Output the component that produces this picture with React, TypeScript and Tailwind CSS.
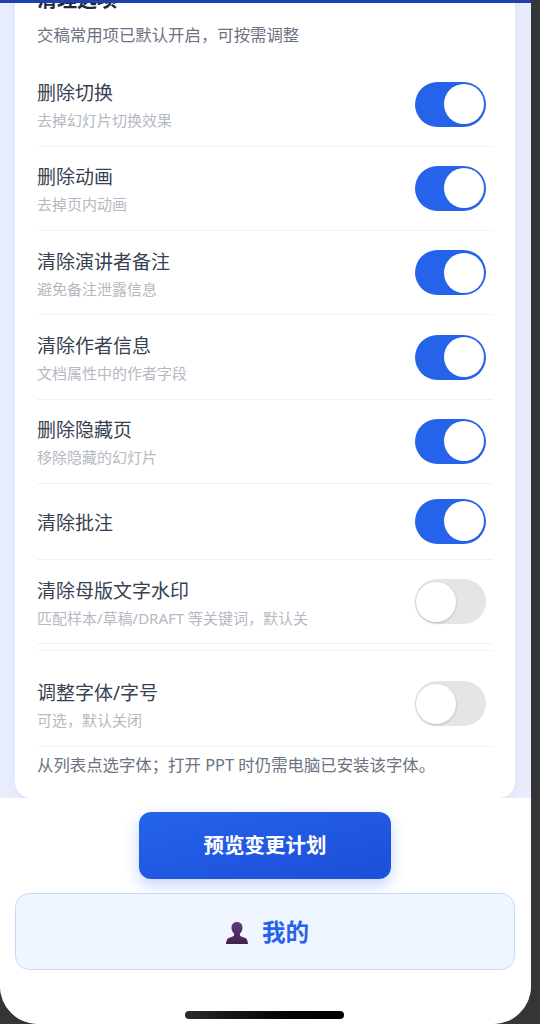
import React from "react";

type RowProps = {
  label: string;
  sub?: string;
  on?: boolean;
};

const options: RowProps[] = [
  { label: "删除切换", sub: "去掉幻灯片切换效果", on: true },
  { label: "删除动画", sub: "去掉页内动画", on: true },
  { label: "清除演讲者备注", sub: "避免备注泄露信息", on: true },
  { label: "清除作者信息", sub: "文档属性中的作者字段", on: true },
  { label: "删除隐藏页", sub: "移除隐藏的幻灯片", on: true },
  { label: "清除批注", on: true },
  { label: "清除母版文字水印", sub: "匹配样本/草稿/DRAFT 等关键词，默认关" },
];

const Toggle = ({ on }: { on?: boolean }) => (
  <div
    className={
      on
        ? "mr-[7px] flex h-[45px] w-[71px] shrink-0 items-center justify-end rounded-full bg-[#2563eb] pr-[2px]"
        : "mr-[7px] flex h-[45px] w-[71px] shrink-0 items-center justify-start rounded-full bg-[#e5e5e5] pl-[1px]"
    }
  >
    <div
      className={
        on
          ? "h-[40px] w-[40px] rounded-full bg-white"
          : "h-[40px] w-[40px] rounded-full bg-white shadow-[0_1px_3px_rgba(0,0,0,0.2)]"
      }
    />
  </div>
);

const Row = ({ label, sub, on }: RowProps) => (
  <div
    className={
      sub
        ? "flex h-[84.3px] items-center justify-between border-b border-[#f1f2f4]"
        : "flex h-[76px] items-center justify-between border-b border-[#f1f2f4]"
    }
  >
    <div className={sub ? "min-w-0 pt-[4px]" : "min-w-0 pt-[3px]"}>
      <div className="text-[19px] leading-[26px] text-[#374151]">{label}</div>
      {sub && <div className="mt-[2px] text-[15px] leading-[24px] text-[#b4b9c2]">{sub}</div>}
    </div>
    <Toggle on={on} />
  </div>
);

const PersonIcon = () => (
  <svg width="22" height="22" viewBox="0 0 22 22" aria-hidden="true">
    <defs>
      <linearGradient id="bust" x1="0" y1="0" x2="0" y2="1">
        <stop offset="0" stopColor="#5f3a80" />
        <stop offset="1" stopColor="#43204f" />
      </linearGradient>
    </defs>
    <path
      d="M11 0C7.600 0 5.500 2.400 5.500 5.800c0 2.500 1 4.500 2.600 5.700v1.300c0 .8-.4 1.300-1.200 1.600L2.600 16.100C1 16.900.4 18.700 0 22h22c-.4-3.300-1-5.100-2.600-5.900l-4.300-1.700c-.8-.3-1.200-.8-1.200-1.600v-1.300c1.600-1.200 2.600-3.200 2.600-5.700C16.500 2.400 14.400 0 11 0z"
      fill="url(#bust)"
    />
  </svg>
);

export default function App() {
  return (
    <div className="h-[1024px] w-[540px] overflow-hidden bg-[#333536] font-['Noto_Sans','Noto_Sans_CJK_SC',sans-serif]">
      <div className="flex h-full w-[531px] flex-col overflow-hidden rounded-b-[38px] bg-[#e8edfd]">
        <div className="h-[3px] shrink-0 bg-[#1e40af]" />

        <main className="h-[795px] shrink-0 overflow-hidden pr-[16px] pl-[15px]">
          <div className="-mt-[18px] rounded-[16px] bg-white px-[22px] pb-[20px] shadow-[0_2px_10px_rgba(30,64,175,0.06)]">
            <h2 className="text-[20px] leading-[30px] font-bold text-[#1f2937]">清理选项</h2>
            <p className="mt-[7px] mb-[14.500px] text-[16.400px] leading-[26px] text-[#6b7280]">
              交稿常用项已默认开启，可按需调整
            </p>

            {options.map((item) => (
              <Row key={item.label} {...item} />
            ))}

            <div className="mt-[6px] border-t border-[#f1f2f4] pt-[11px]">
              <Row label="调整字体/字号" sub="可选，默认关闭" />
            </div>
            <p className="mt-[5px] text-[16.400px] leading-[26px] whitespace-nowrap text-[#6b7280]">
              从列表点选字体；打开 PPT 时仍需电脑已安装该字体。
            </p>
          </div>
        </main>

        <footer className="relative flex flex-1 flex-col items-center bg-white pt-[14px] pr-[16px] pl-[15px]">
          <button className="h-[67px] w-[252px] rounded-[12px] bg-gradient-to-br from-[#2563eb] to-[#1d4ed8] text-[20.500px] font-bold text-white shadow-[0_6px_16px_rgba(37,99,235,0.28)]">
            预览变更计划
          </button>
          <button className="mt-[14px] flex h-[77px] w-full items-center justify-center gap-[14px] rounded-[14px] border border-[#c4dcfc] bg-[#eff6ff] pt-[2px] pl-[5px] text-[23.500px] font-bold text-[#2563eb]">
            <PersonIcon />
            我的
          </button>
          <div className="absolute bottom-[5px] left-[185px] h-[8px] w-[159px] rounded-full bg-gradient-to-r from-[#2a2a2a] to-black" />
        </footer>
      </div>
    </div>
  );
}
